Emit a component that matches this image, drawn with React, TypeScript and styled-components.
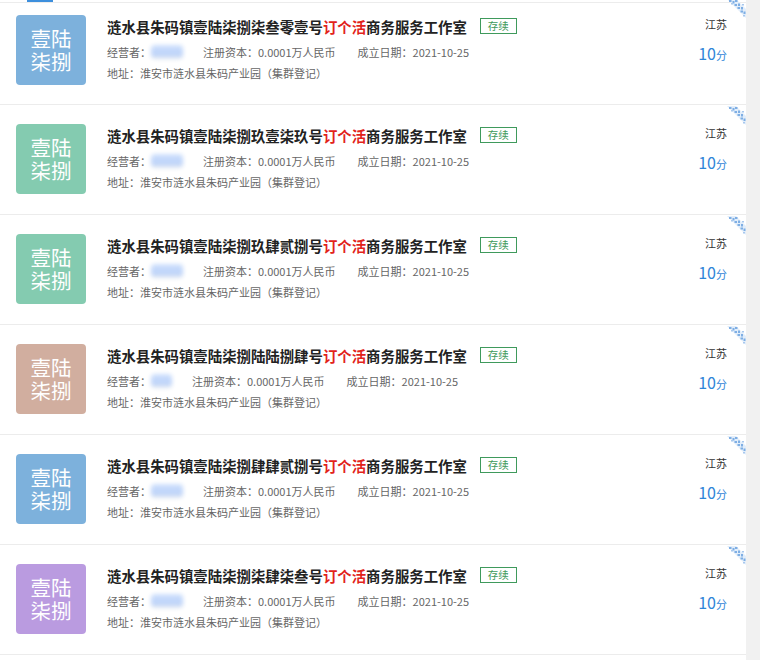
import React from "react";
import styled, { createGlobalStyle } from "styled-components";

const GlobalStyle = createGlobalStyle`
	html, body {
		margin: 0;
		padding: 0;
		background: #fff;
	}
	body {
		font-family: "Noto Sans CJK SC", "Noto Sans", sans-serif;
		color: #333;
	}
`;

const Page = styled.div`
	display: flex;
	min-height: 100vh;
	overflow: hidden;
`;

const List = styled.div`
	flex: 1;
	display: flex;
	flex-direction: column;
`;

const Track = styled.div`
	width: 14px;
	background: #f1f1f1;
`;

const TopStrip = styled.div`
	height: 2px;
	border-bottom: 1px solid #ececec;
	padding-left: 27px;
	.top-tab {
		width: 26px;
		height: 2px;
		background: #3d8fdd;
	}
`;

const Row = styled.div<{ $first?: boolean }>`
	position: relative;
	display: flex;
	align-items: flex-start;
	gap: 21px;
	padding: ${(p) => (p.$first ? "12px 19px 19px 16px" : "19px 19px 20px 16px")};
	border-bottom: 1px solid #ececec;
`;

const Logo = styled.div<{ $color: string }>`
	flex: none;
	width: 70px;
	height: 70px;
	border-radius: 4px;
	background: ${(p) => p.$color};
	color: #fff;
	display: flex;
	align-items: center;
	justify-content: center;
	text-align: center;
	font-size: 20.5px;
	line-height: 23px;
`;

const Info = styled.div`
	flex: 1;
	min-width: 0;
`;

const Title = styled.div`
	display: flex;
	align-items: center;
	height: 22px;
	font-size: 14.4px;
	font-weight: 700;
	color: #222;
	white-space: nowrap;
	.hl {
		color: #e2231a;
	}
`;

const Tag = styled.span`
	margin-left: 13px;
	height: 14px;
	padding: 0 7px;
	border: 1px solid #3f9a5c;
	color: #3f9a5c;
	font-size: 10.5px;
	font-weight: 400;
	line-height: 14px;
`;

const Meta = styled.div<{ $top?: number }>`
	display: flex;
	align-items: center;
	margin-top: ${(p) => p.$top ?? 0}px;
	height: 21px;
	font-size: 11px;
	color: #666;
	white-space: nowrap;
`;

const MetaItem = styled.span<{ $gap?: number }>`
	display: inline-flex;
	align-items: center;
	margin-right: ${(p) => p.$gap ?? 20}px;
`;

const Masked = styled.span<{ $w: number }>`
	display: inline-block;
	width: ${(p) => p.$w}px;
	height: 14px;
	border-radius: 4px;
	background: linear-gradient(180deg, #cfe0fc 0%, #bcd3fa 65%, #e3e8ef 100%);
	filter: blur(2.2px);
`;

const Side = styled.div`
	flex: none;
	display: flex;
	flex-direction: column;
	align-items: flex-end;
	.province {
		height: 18px;
		line-height: 18px;
		font-size: 11px;
		color: #333;
	}
	.score {
		margin-top: 10px;
		line-height: 20px;
		color: #2f85d8;
		font-size: 16px;
		.unit {
			font-size: 11px;
		}
	}
`;

const Corner = styled.svg<{ $first?: boolean }>`
	position: absolute;
	top: ${(p) => (p.$first ? -4 : 1)}px;
	right: 0;
	width: 22px;
	height: 22px;
`;

type Item = { code: string; color: string; nameW: number };

const items: Item[] = [
	{ code: "柒叁零壹", color: "#7db1dc", nameW: 32 },
	{ code: "玖壹柒玖", color: "#84cbb0", nameW: 32 },
	{ code: "玖肆贰捌", color: "#84cbb0", nameW: 32 },
	{ code: "陆陆捌肆", color: "#d1ae9f", nameW: 21 },
	{ code: "肆肆贰捌", color: "#7db1dc", nameW: 32 },
	{ code: "柒肆柒叁", color: "#ba9be0", nameW: 32 },
];

const CornerMark: React.FC<{ first?: boolean }> = ({ first }) => (
	<Corner $first={first} viewBox="0 0 22 22">
		<polygon points="3,0 12,0 22,10 22,19" fill="#e3eefa" />
		<g fill="#7eaee4">
			<rect x="5" y="1" width="2.5" height="2" />
			<rect x="8.5" y="2" width="2" height="2.5" />
			<rect x="11" y="1" width="2.5" height="2" />
			<rect x="10.5" y="5" width="2.5" height="2" />
			<rect x="14" y="4.5" width="2" height="2.5" />
			<rect x="13.5" y="8" width="2.5" height="2" />
			<rect x="17" y="8" width="2" height="2.5" />
			<rect x="16.5" y="11.5" width="2.5" height="2" />
			<rect x="19.5" y="12.5" width="2" height="2.5" />
		</g>
		<g fill="#a8c8ee">
			<rect x="7" y="4" width="2" height="1.5" />
			<rect x="18" y="5" width="2" height="1.5" />
			<rect x="19" y="16" width="2" height="1.5" />
		</g>
	</Corner>
);

const App: React.FC = () => {
	return (
		<Page>
			<GlobalStyle />
			<List>
				<TopStrip>
					<div className="top-tab" />
				</TopStrip>
				{items.map((it, i) => (
					<Row key={it.code} $first={i === 0}>
						<Logo $color={it.color}>
							壹陆
							<br />
							柒捌
						</Logo>
						<Info>
							<Title>
								涟水县朱码镇壹陆柒捌{it.code}号<span className="hl">订个活</span>商务服务工作室
								<Tag>存续</Tag>
							</Title>
							<Meta $top={4}>
								<MetaItem>
									经营者：
									<Masked $w={it.nameW} />
								</MetaItem>
								<MetaItem $gap={22}>注册资本：0.0001万人民币</MetaItem>
								<MetaItem>成立日期：2021-10-25</MetaItem>
							</Meta>
							<Meta>地址：淮安市涟水县朱码产业园（集群登记）</Meta>
						</Info>
						<Side>
							<span className="province">江苏</span>
							<span className="score">
								10<span className="unit">分</span>
							</span>
						</Side>
						<CornerMark first={i === 0} />
					</Row>
				))}
			</List>
			<Track />
		</Page>
	);
};

export default App;
